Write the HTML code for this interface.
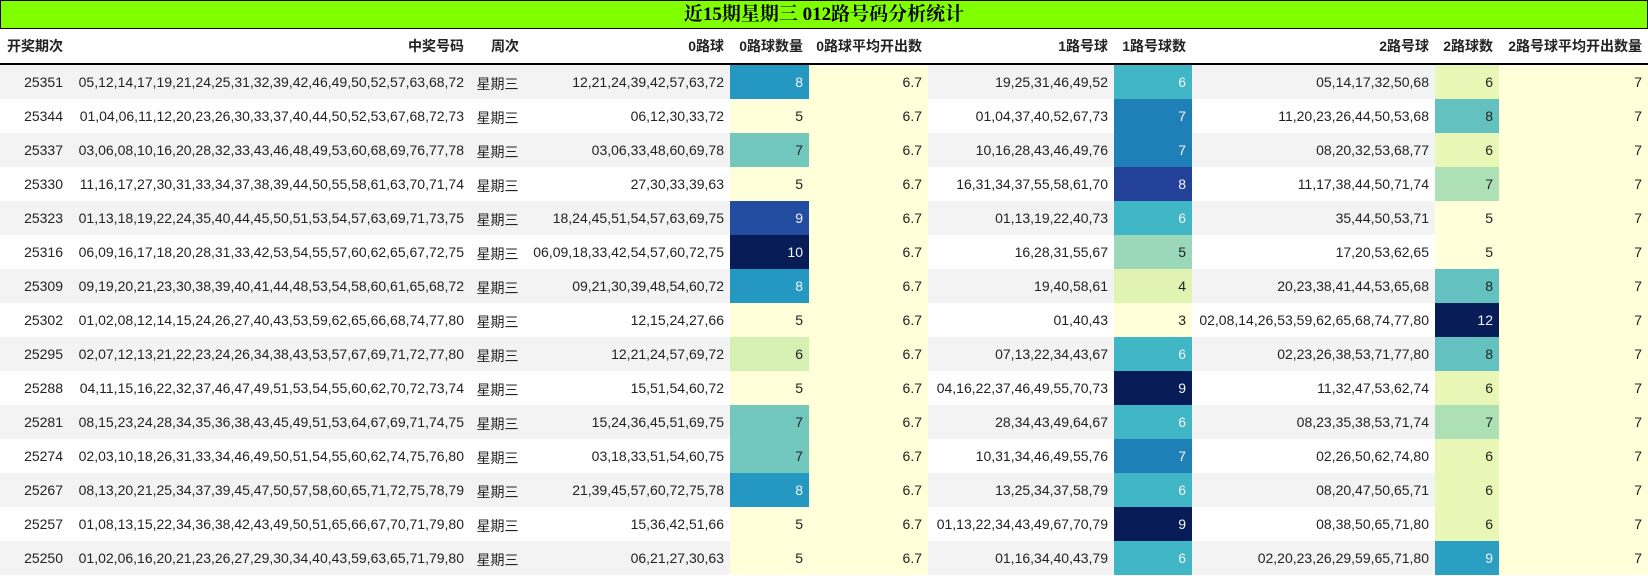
<!DOCTYPE html>
<html><head><meta charset="utf-8"><style>
body{margin:0;background:#fff;width:1648px;height:576px;overflow:hidden;font-family:"Liberation Sans","Noto Sans CJK SC",sans-serif;color:#222}
.t{background:#7fff00;border:1px solid #000;box-sizing:border-box;height:29px;text-align:center;font:bold 19px "Liberation Serif","Noto Serif CJK SC",serif;line-height:27px;color:#000}
table{border-collapse:collapse;table-layout:fixed;width:1648px;font-size:14px}
td,th{padding:0 6px 0 0;text-align:right;white-space:nowrap;overflow:hidden}
th{height:34px;font-weight:bold;border-bottom:2px solid #000;font-size:14px}
td{height:34px}
tr.o td{background:#f3f3f3}
td.w{text-align:center;padding:0;padding-top:4px;box-sizing:border-box}
tr td.y{background:#ffffd9}
.d{color:#f4f4f4}
</style></head><body>
<div class="t">近15期星期三 012路号码分析统计</div>
<table>
<colgroup><col style="width:69px"><col style="width:401px"><col style="width:55px"><col style="width:205px"><col style="width:79px"><col style="width:119px"><col style="width:186px"><col style="width:78px"><col style="width:243px"><col style="width:64px"><col style="width:149px"></colgroup>
<tr><th>开奖期次</th><th>中奖号码</th><th>周次</th><th>0路球</th><th>0路球数量</th><th>0路球平均开出数</th><th>1路号球</th><th>1路号球数</th><th>2路号球</th><th>2路球数</th><th>2路号球平均开出数量</th></tr>
<tr class="o"><td>25351</td><td>05,12,14,17,19,21,24,25,31,32,39,42,46,49,50,52,57,63,68,72</td><td class="w">星期三</td><td>12,21,24,39,42,57,63,72</td><td class="d" style="background:#2498c1">8</td><td class="y">6.7</td><td>19,25,31,46,49,52</td><td class="d" style="background:#41b6c4">6</td><td>05,14,17,32,50,68</td><td style="background:#e9f7b6">6</td><td class="y">7</td></tr>
<tr><td>25344</td><td>01,04,06,11,12,20,23,26,30,33,37,40,44,50,52,53,67,68,72,73</td><td class="w">星期三</td><td>06,12,30,33,72</td><td style="background:#ffffd9">5</td><td class="y">6.7</td><td>01,04,37,40,52,67,73</td><td class="d" style="background:#1f80b8">7</td><td>11,20,23,26,44,50,53,68</td><td style="background:#63c2bf">8</td><td class="y">7</td></tr>
<tr class="o"><td>25337</td><td>03,06,08,10,16,20,28,32,33,43,46,48,49,53,60,68,69,76,77,78</td><td class="w">星期三</td><td>03,06,33,48,60,69,78</td><td style="background:#73c8bd">7</td><td class="y">6.7</td><td>10,16,28,43,46,49,76</td><td class="d" style="background:#1f80b8">7</td><td>08,20,32,53,68,77</td><td style="background:#e9f7b6">6</td><td class="y">7</td></tr>
<tr><td>25330</td><td>11,16,17,27,30,31,33,34,37,38,39,44,50,55,58,61,63,70,71,74</td><td class="w">星期三</td><td>27,30,33,39,63</td><td style="background:#ffffd9">5</td><td class="y">6.7</td><td>16,31,34,37,55,58,61,70</td><td class="d" style="background:#24419a">8</td><td>11,17,38,44,50,71,74</td><td style="background:#aee0b6">7</td><td class="y">7</td></tr>
<tr class="o"><td>25323</td><td>01,13,18,19,22,24,35,40,44,45,50,51,53,54,57,63,69,71,73,75</td><td class="w">星期三</td><td>18,24,45,51,54,57,63,69,75</td><td class="d" style="background:#234da0">9</td><td class="y">6.7</td><td>01,13,19,22,40,73</td><td class="d" style="background:#41b6c4">6</td><td>35,44,50,53,71</td><td style="background:#ffffd9">5</td><td class="y">7</td></tr>
<tr><td>25316</td><td>06,09,16,17,18,20,28,31,33,42,53,54,55,57,60,62,65,67,72,75</td><td class="w">星期三</td><td>06,09,18,33,42,54,57,60,72,75</td><td class="d" style="background:#081d58">10</td><td class="y">6.7</td><td>16,28,31,55,67</td><td style="background:#9ad8b9">5</td><td>17,20,53,62,65</td><td style="background:#ffffd9">5</td><td class="y">7</td></tr>
<tr class="o"><td>25309</td><td>09,19,20,21,23,30,38,39,40,41,44,48,53,54,58,60,61,65,68,72</td><td class="w">星期三</td><td>09,21,30,39,48,54,60,72</td><td class="d" style="background:#2498c1">8</td><td class="y">6.7</td><td>19,40,58,61</td><td style="background:#e1f3b2">4</td><td>20,23,38,41,44,53,65,68</td><td style="background:#63c2bf">8</td><td class="y">7</td></tr>
<tr><td>25302</td><td>01,02,08,12,14,15,24,26,27,40,43,53,59,62,65,66,68,74,77,80</td><td class="w">星期三</td><td>12,15,24,27,66</td><td style="background:#ffffd9">5</td><td class="y">6.7</td><td>01,40,43</td><td style="background:#ffffd9">3</td><td>02,08,14,26,53,59,62,65,68,74,77,80</td><td class="d" style="background:#081d58">12</td><td class="y">7</td></tr>
<tr class="o"><td>25295</td><td>02,07,12,13,21,22,23,24,26,34,38,43,53,57,67,69,71,72,77,80</td><td class="w">星期三</td><td>12,21,24,57,69,72</td><td style="background:#d6efb3">6</td><td class="y">6.7</td><td>07,13,22,34,43,67</td><td class="d" style="background:#41b6c4">6</td><td>02,23,26,38,53,71,77,80</td><td style="background:#63c2bf">8</td><td class="y">7</td></tr>
<tr><td>25288</td><td>04,11,15,16,22,32,37,46,47,49,51,53,54,55,60,62,70,72,73,74</td><td class="w">星期三</td><td>15,51,54,60,72</td><td style="background:#ffffd9">5</td><td class="y">6.7</td><td>04,16,22,37,46,49,55,70,73</td><td class="d" style="background:#081d58">9</td><td>11,32,47,53,62,74</td><td style="background:#e9f7b6">6</td><td class="y">7</td></tr>
<tr class="o"><td>25281</td><td>08,15,23,24,28,34,35,36,38,43,45,49,51,53,64,67,69,71,74,75</td><td class="w">星期三</td><td>15,24,36,45,51,69,75</td><td style="background:#73c8bd">7</td><td class="y">6.7</td><td>28,34,43,49,64,67</td><td class="d" style="background:#41b6c4">6</td><td>08,23,35,38,53,71,74</td><td style="background:#aee0b6">7</td><td class="y">7</td></tr>
<tr><td>25274</td><td>02,03,10,18,26,31,33,34,46,49,50,51,54,55,60,62,74,75,76,80</td><td class="w">星期三</td><td>03,18,33,51,54,60,75</td><td style="background:#73c8bd">7</td><td class="y">6.7</td><td>10,31,34,46,49,55,76</td><td class="d" style="background:#1f80b8">7</td><td>02,26,50,62,74,80</td><td style="background:#e9f7b6">6</td><td class="y">7</td></tr>
<tr class="o"><td>25267</td><td>08,13,20,21,25,34,37,39,45,47,50,57,58,60,65,71,72,75,78,79</td><td class="w">星期三</td><td>21,39,45,57,60,72,75,78</td><td class="d" style="background:#2498c1">8</td><td class="y">6.7</td><td>13,25,34,37,58,79</td><td class="d" style="background:#41b6c4">6</td><td>08,20,47,50,65,71</td><td style="background:#e9f7b6">6</td><td class="y">7</td></tr>
<tr><td>25257</td><td>01,08,13,15,22,34,36,38,42,43,49,50,51,65,66,67,70,71,79,80</td><td class="w">星期三</td><td>15,36,42,51,66</td><td style="background:#ffffd9">5</td><td class="y">6.7</td><td>01,13,22,34,43,49,67,70,79</td><td class="d" style="background:#081d58">9</td><td>08,38,50,65,71,80</td><td style="background:#e9f7b6">6</td><td class="y">7</td></tr>
<tr class="o"><td>25250</td><td>01,02,06,16,20,21,23,26,27,29,30,34,40,43,59,63,65,71,79,80</td><td class="w">星期三</td><td>06,21,27,30,63</td><td style="background:#ffffd9">5</td><td class="y">6.7</td><td>01,16,34,40,43,79</td><td class="d" style="background:#41b6c4">6</td><td>02,20,23,26,29,59,65,71,80</td><td class="d" style="background:#2b9fc2">9</td><td class="y">7</td></tr>
</table>
</body></html>
